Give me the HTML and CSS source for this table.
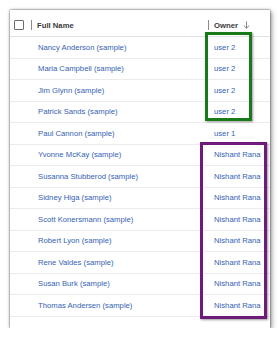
FILE: index.html
```html
<!DOCTYPE html>
<html>
<head>
<meta charset="utf-8">
<link rel="stylesheet" href="styles.css">
</head>
<body>
<div class="card">
  <div class="head row">
    <div class="c-check"><span class="box"></span></div>
    <div class="c-name"><span class="sep"></span><span class="htext">Full Name</span></div>
    <div class="c-owner"><span class="sep"></span><span class="htext">Owner</span>
      <svg class="arrow" width="7" height="8" viewBox="0 0 7 8"><path d="M3.5 0.5V7.2M0.8 4.6L3.5 7.2L6.2 4.6" fill="none" stroke="#777" stroke-width="0.9"/></svg>
    </div>
    <div class="c-more"><span class="sep"></span></div>
  </div>
  <div class="row"><div class="c-check"></div><div class="c-name">Nancy Anderson (sample)</div><div class="c-owner">user 2</div></div>
  <div class="row"><div class="c-check"></div><div class="c-name">Maria Campbell (sample)</div><div class="c-owner">user 2</div></div>
  <div class="row"><div class="c-check"></div><div class="c-name">Jim Glynn (sample)</div><div class="c-owner">user 2</div></div>
  <div class="row"><div class="c-check"></div><div class="c-name">Patrick Sands (sample)</div><div class="c-owner">user 2</div></div>
  <div class="row"><div class="c-check"></div><div class="c-name">Paul Cannon (sample)</div><div class="c-owner">user 1</div></div>
  <div class="row"><div class="c-check"></div><div class="c-name">Yvonne McKay (sample)</div><div class="c-owner">Nishant Rana</div></div>
  <div class="row"><div class="c-check"></div><div class="c-name">Susanna Stubberod (sample)</div><div class="c-owner">Nishant Rana</div></div>
  <div class="row"><div class="c-check"></div><div class="c-name">Sidney Higa (sample)</div><div class="c-owner">Nishant Rana</div></div>
  <div class="row"><div class="c-check"></div><div class="c-name">Scott Konersmann (sample)</div><div class="c-owner">Nishant Rana</div></div>
  <div class="row"><div class="c-check"></div><div class="c-name">Robert Lyon (sample)</div><div class="c-owner">Nishant Rana</div></div>
  <div class="row"><div class="c-check"></div><div class="c-name">Rene Valdes (sample)</div><div class="c-owner">Nishant Rana</div></div>
  <div class="row"><div class="c-check"></div><div class="c-name">Susan Burk (sample)</div><div class="c-owner">Nishant Rana</div></div>
  <div class="row"><div class="c-check"></div><div class="c-name">Thomas Andersen (sample)</div><div class="c-owner">Nishant Rana</div></div>
  <div class="hl hl-green"></div>
  <div class="hl hl-purple"></div>
</div>
</body>
</html>
```

FILE: styles.css
```css
html, body {
  margin: 0;
  padding: 0;
  background: #ffffff;
}
body {
  padding: 10px 0 0 10px;
  font-family: "Liberation Sans", Arial, sans-serif;
  font-size: 7.7px;
}
.card {
  position: relative;
  width: 260px;
  height: 318px;
  background: #fff;
  box-shadow: 0 0 1px rgba(0,0,0,0.7), 0 0 3px rgba(0,0,0,0.35), 2px 2px 5px rgba(0,0,0,0.35);
  overflow: hidden;
}
.row {
  display: grid;
  grid-template-columns: 21px 177px 59px 3px;
  height: 21.5px;
  align-items: center;
  border-bottom: 1px solid #ebebeb;
  box-sizing: border-box;
  color: #3562b4;
}
.row.head {
  height: 27px;
  padding-top: 4px;
  color: #3a3a3a;
  border-bottom: 1px solid #e1e1e1;
}
.c-check {
  display: flex;
  align-items: center;
  padding-left: 4px;
}
.box {
  width: 8px;
  height: 8px;
  border: 1px solid #6e6e6e;
  border-radius: 1px;
}
.c-name, .c-owner, .c-more {
  display: flex;
  align-items: center;
  white-space: nowrap;
}
.row .c-name { padding-left: 7px; }
.row .c-owner { padding-left: 6px; }
.head .c-name, .head .c-owner, .head .c-more { padding-left: 0; }
.sep {
  width: 1px;
  height: 10px;
  background: #8a8a8a;
  margin-right: 5px;
}
.htext {
  font-weight: 600;
}
.arrow {
  margin-left: 5px;
}
.hl {
  position: absolute;
  border: 3px solid;
  box-sizing: border-box;
  box-shadow: 1px 1px 2px rgba(0,0,0,0.4);
}
.hl-green {
  border-color: #187a18;
  left: 195px;
  top: 22px;
  width: 47px;
  height: 89px;
}
.hl-purple {
  border-color: #6e1a7a;
  left: 190px;
  top: 132px;
  width: 67px;
  height: 177px;
}
```
